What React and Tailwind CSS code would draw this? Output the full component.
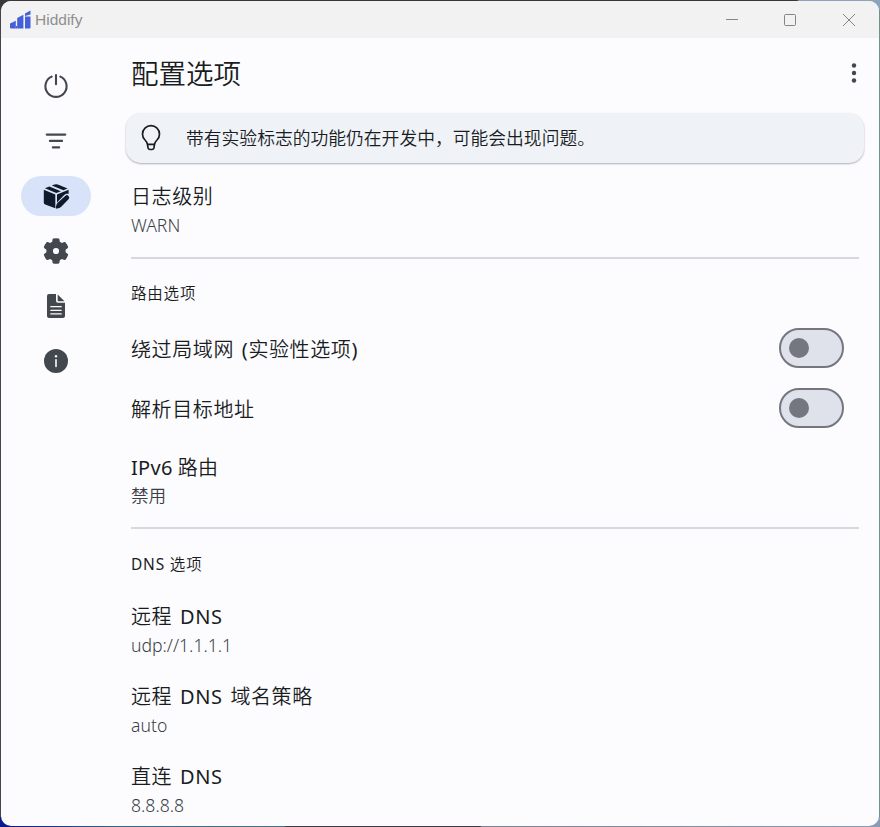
import { useState } from "react";

const NAV_ITEMS = [
  { id: "home", label: "Home", icon: PowerIcon },
  { id: "proxies", label: "Proxies", icon: FilterIcon },
  { id: "config", label: "Config", icon: BoxEditIcon },
  { id: "settings", label: "Settings", icon: GearIcon },
  { id: "logs", label: "Logs", icon: DocumentIcon },
  { id: "about", label: "About", icon: InfoIcon },
];

function PowerIcon() {
  return (
    <svg className="size-[30px]" viewBox="0 0 30 30" fill="none" stroke="currentColor" strokeWidth="2.1" strokeLinecap="round">
      <path d="M15 4v9.200" />
      <path d="M10.700 5.600A10.600 10.600 0 1 0 19.300 5.600" />
    </svg>
  );
}

function FilterIcon() {
  return (
    <svg className="size-[30px]" viewBox="0 0 30 30" fill="none" stroke="currentColor" strokeWidth="2.1" strokeLinecap="round">
      <path d="M5.700 8.600h18.600M8.900 14.900h12.200M11.800 21.400h6.400" />
    </svg>
  );
}

function BoxEditIcon() {
  return (
    <svg className="size-[30px]" viewBox="0 0 30 30" fill="currentColor">
      <path d="M10.800 4.500 13.400 3.500a4.500 4.500 0 0 1 3.400 0L26.600 7.500 22.400 9.200z" />
      <path d="M8.300 5.500 19.900 10.200 15.300 12 3.900 7.300z" />
      <path d="M2.800 8.800 14.300 13.500V27.300L4.200 23.400a2.200 2.200 0 0 1-1.400-2z" />
      <path d="M16 13.500 27.600 8.800v4.100c-1.500-.4-3.200 0-4.400 1.200l-6 6.200-1.200 1.400z" />
      <path d="M24.200 14.900a2.300 2.300 0 0 1 3.300 3.300l-7 7.400a4.500 4.500 0 0 1-2.100 1.300l-2.300.7a1.100 1.100 0 0 1-1.300-1.300l.6-2.400a4.500 4.500 0 0 1 1.300-2.100z" />
    </svg>
  );
}

function GearIcon() {
  return (
    <svg className="size-[30px]" viewBox="0 0 30 30" fill="currentColor">
      <path
        fillRule="evenodd"
        d="M12.200 2.400Q15 2 17.800 2.400Q18.300 2.600 18.400 3.200L18.800 5.800L20.900 7L23.300 6Q24 5.800 24.400 6.300Q26.200 8.400 27.100 11.100Q27.200 11.600 26.800 12L24.600 13.800V16.200L26.800 18Q27.200 18.400 27.100 18.900Q26.200 21.600 24.400 23.700Q24 24.200 23.300 24L20.900 23L18.800 24.200L18.400 26.800Q18.300 27.400 17.800 27.600Q15 28 12.200 27.600Q11.700 27.400 11.600 26.800L11.200 24.200L9.100 23L6.700 24Q6 24.200 5.600 23.700Q3.800 21.600 2.900 18.900Q2.800 18.400 3.200 18L5.400 16.200V13.800L3.200 12Q2.800 11.600 2.900 11.100Q3.800 8.400 5.600 6.300Q6 5.800 6.700 6L9.100 7L11.200 5.800L11.600 3.200Q11.700 2.600 12.200 2.400ZM15 11.900A3.100 3.100 0 1 0 15 18.100A3.100 3.100 0 1 0 15 11.900Z"
      />
    </svg>
  );
}

function DocumentIcon() {
  return (
    <svg className="size-[30px]" viewBox="0 0 30 30" fill="currentColor">
      <path
        fillRule="evenodd"
        d="M15 3v6.800a2 2 0 0 0 2 2h7V25a2 2 0 0 1-2 2H8a2 2 0 0 1-2-2V5a2 2 0 0 1 2-2zM9.800 15a.6.6 0 0 0 0 1.300h10.400a.6.6 0 0 0 0-1.300zM9.800 18.700a.6.6 0 0 0 0 1.300h10.400a.6.6 0 0 0 0-1.300zM9.800 22.300a.6.6 0 0 0 0 1.300h10.400a.6.6 0 0 0 0-1.300z"
      />
      <path d="M16.700 3.500 23.500 10.300h-6.200a.6.6 0 0 1-.6-.6z" />
    </svg>
  );
}

function InfoIcon() {
  return (
    <svg className="size-[30px]" viewBox="0 0 30 30">
      <circle cx="15" cy="15" r="12" fill="currentColor" />
      <path d="M15 13.700v6.800" stroke="#fcfcff" strokeWidth="1.600" strokeLinecap="round" />
      <circle cx="15" cy="10.200" r="1.200" fill="#fcfcff" />
    </svg>
  );
}

function BulbIcon() {
  return (
    <svg className="size-[30px]" viewBox="0 0 30 30" fill="none" stroke="currentColor" strokeWidth="1.700" strokeLinejoin="round">
      <path d="M11.400 21.200c-.4-2-1.200-3-2.400-4.200A8.400 8.400 0 0 1 6.500 11.200a8.500 8.500 0 0 1 17 0c0 2.300-1 4.200-2.500 5.800-1.200 1.200-2 2.200-2.400 4.200l-.7 3.800a2 2 0 0 1-1.900 1.500h-2a2 2 0 0 1-1.900-1.500z" />
      <path d="M11.400 21.400h7.200" />
    </svg>
  );
}

function Logo() {
  return (
    <svg className="h-[20px] w-[21px]" viewBox="0 0 21 20" fill="#455fd8">
      <path d="M0 13.600 5.800 10.700v7.800H1.200A1.200 1.200 0 0 1 0 17.300z" />
      <path d="M5.800 16h1.400v2.500H5.800z" />
      <path d="M7.200 8 13.400 4.700v13.800H7.200z" />
      <path d="M15 3.500 20.500.4v4L15 6z" />
      <path d="M15 6.600h5.500v10.700a1.200 1.200 0 0 1-1.200 1.200H15z" />
    </svg>
  );
}

function TitleBar() {
  return (
    <header className="flex h-[37px] shrink-0 items-center bg-[#f2f2f2] pl-[9px]">
      <Logo />
      <span className="ml-1 pt-px font-['Liberation_Sans',sans-serif] text-[15.500px] text-[#8f8f8f]">Hiddify</span>
      <div className="ml-auto flex pr-6 text-[#858585]">
        <svg className="mr-[46px] size-3" viewBox="0 0 12 12" stroke="currentColor">
          <path d="M0 5.500h12" />
        </svg>
        <svg className="mr-[47px] size-3" viewBox="0 0 12 12" fill="none" stroke="currentColor">
          <rect x=".5" y=".5" width="11" height="11" rx="1" />
        </svg>
        <svg className="size-3" viewBox="0 0 12 12" stroke="currentColor">
          <path d="M0 0l12 12M12 0L0 12" />
        </svg>
      </div>
    </header>
  );
}

function NavRail({ active, onSelect }) {
  return (
    <nav className="flex w-[110px] shrink-0 flex-col items-center gap-[15px] pt-[28px]">
      {NAV_ITEMS.map(({ id, label, icon: Icon }) => (
        <button
          key={id}
          aria-label={label}
          onClick={() => onSelect(id)}
          className={
            id === active
              ? "flex h-10 w-[70px] items-center justify-center rounded-full bg-[#d8e2f8] text-[#0e1b2b]"
              : "flex h-10 w-[70px] items-center justify-center rounded-full text-[#43474e]"
          }
        >
          <Icon />
        </button>
      ))}
    </nav>
  );
}

function Tile({ title, value, compact }) {
  return (
    <div className="flex h-20 flex-col pt-3">
      <div
        className={
          compact
            ? "text-[20px] leading-7 tracking-[.3px] text-[#1a1c1e] [word-spacing:-.5px]"
            : "text-[20px] leading-[30px] tracking-[.6px] text-[#1a1c1e] [word-spacing:2px]"
        }
      >
        {title}
      </div>
      <div className="text-[17.600px] leading-[26px] font-light text-[#3b3f45]">{value}</div>
    </div>
  );
}

function SwitchTile({ title }) {
  const [on, setOn] = useState(false);

  return (
    <div className="flex h-[60px] items-center justify-between pr-[15px]">
      <div className="pt-[3px] text-[20px] leading-[30px] tracking-[.6px] text-[#1a1c1e] [word-spacing:2px]">{title}</div>
      <button
        role="switch"
        aria-checked={on}
        aria-label={title}
        onClick={() => setOn(!on)}
        className={
          on
            ? "flex h-10 w-[65px] items-center justify-end rounded-full bg-[#455fd8] px-2"
            : "flex h-10 w-[65px] items-center rounded-full border-[2.500px] border-[#74777f] bg-[#dfe2eb] px-2"
        }
      >
        <span className={on ? "size-6 rounded-full bg-white" : "size-5 rounded-full bg-[#74777f]"} />
      </button>
    </div>
  );
}

function SectionTitle({ children }) {
  return <h2 className="text-[15.500px] leading-6 tracking-[.8px] text-[#1a1c1e]">{children}</h2>;
}

export default function App() {
  const [page, setPage] = useState("config");

  return (
    <div className="h-[827px] w-[880px] overflow-hidden p-px [background:linear-gradient(90deg,#0a1a8a_10px,#3d6585_120px,#4d7085_284px,#403b48_286px,#403b48_480px,#7d8090_482px,#8a9bb5)_bottom/100%_10px_no-repeat,linear-gradient(90deg,#39373b_797px,#8aa5bb_799px)_top/100%_10px_no-repeat,linear-gradient(90deg,#46444c_50%,#71918f_50%)]">
      <div className="flex h-[825px] flex-col overflow-hidden rounded-[10px] bg-[#fcfcff] font-['Noto_Sans','Noto_Sans_CJK_SC_DemiLight','Noto_Sans_CJK_SC',sans-serif]">
        <TitleBar />
        <div className="flex min-h-0 flex-1">
          <NavRail active={page} onSelect={setPage} />
          <main className="flex min-w-0 flex-1 flex-col">
            <div className="flex h-[75px] shrink-0 justify-between pt-4 pr-[22px] pl-5">
              <h1 className="text-[27.500px] leading-10 text-[#1a1c1e]">配置选项</h1>
              <svg className="mt-[9px] h-5 w-[6px]" viewBox="0 0 6 20" fill="#43474e">
                <circle cx="3" cy="2.500" r="2.200" />
                <circle cx="3" cy="10" r="2.200" />
                <circle cx="3" cy="17.500" r="2.200" />
              </svg>
            </div>
            <div className="mx-[15px] flex h-[50px] shrink-0 items-center rounded-[15px] bg-[#eff3f8] pl-[10px] text-[#1a1c1e] shadow-[0_1px_2px_rgba(0,0,0,0.3)]">
              <BulbIcon />
              <p className="ml-5 text-[17.800px]">带有实验标志的功能仍在开发中，可能会出现问题。</p>
            </div>
            <div className="flex flex-col pt-[7px] pr-5 pl-5">
              <Tile title="日志级别" value="WARN" />
              <hr className="mt-[7px] border-t-2 border-[#d6d8dd]" />
              <div className="pt-[22px] pb-[13px]">
                <SectionTitle>路由选项</SectionTitle>
              </div>
              <SwitchTile title="绕过局域网 (实验性选项)" />
              <SwitchTile title="解析目标地址" />
              <div className="pt-1">
                <Tile title="IPv6 路由" value="禁用" compact />
              </div>
              <hr className="mt-[5px] border-t-2 border-[#d6d8dd]" />
              <div className="pt-[23px] pb-[14px]">
                <SectionTitle>DNS 选项</SectionTitle>
              </div>
              <Tile title="远程 DNS" value="udp://1.1.1.1" />
              <Tile title="远程 DNS 域名策略" value="auto" />
              <Tile title="直连 DNS" value="8.8.8.8" />
            </div>
          </main>
        </div>
      </div>
    </div>
  );
}
